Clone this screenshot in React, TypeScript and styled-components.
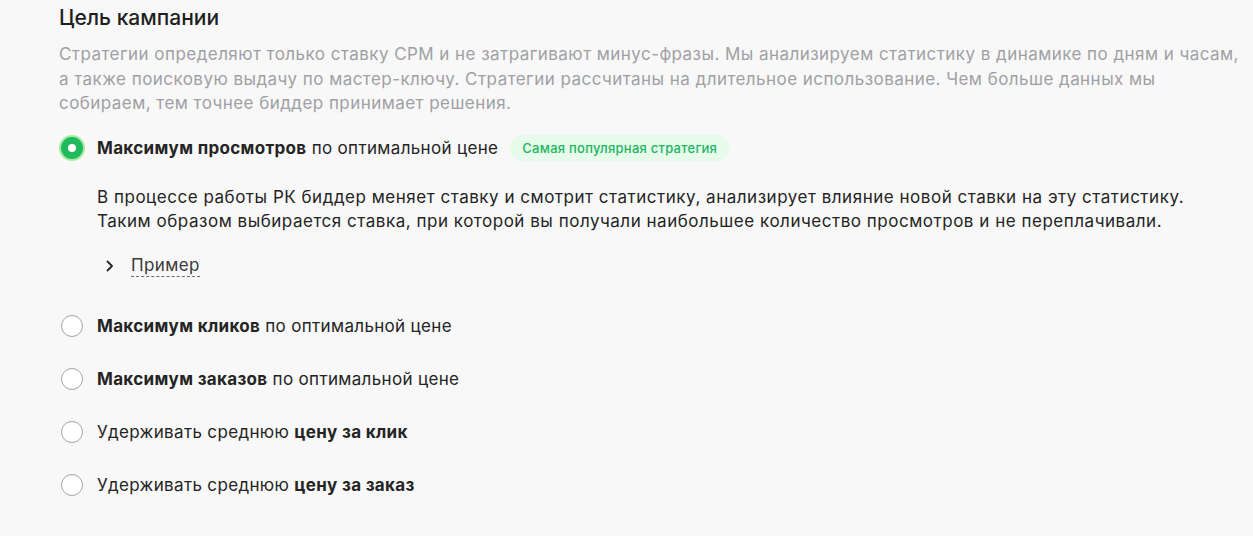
import React, { useState } from "react";
import styled, { createGlobalStyle } from "styled-components";

const GlobalStyle = createGlobalStyle`
  body {
    margin: 0;
    background: #f8f8f8;
    font-family: Inter, "Noto Sans", sans-serif;
    color: #242424;
  }
`;

type Option = {
  id: string;
  before?: string;
  bold: string;
  after?: string;
  badge?: string;
  text?: string[];
};

const options: Option[] = [
  {
    id: "views",
    bold: "Максимум просмотров",
    after: " по оптимальной цене",
    badge: "Самая популярная стратегия",
    text: [
      "В процессе работы РК биддер меняет ставку и смотрит статистику, анализирует влияние новой ставки на эту статистику.",
      "Таким образом выбирается ставка, при которой вы получали наибольшее количество просмотров и не переплачивали.",
    ],
  },
  { id: "clicks", bold: "Максимум кликов", after: " по оптимальной цене" },
  { id: "orders", bold: "Максимум заказов", after: " по оптимальной цене" },
  { id: "cpc", before: "Удерживать среднюю ", bold: "цену за клик" },
  { id: "cpo", before: "Удерживать среднюю ", bold: "цену за заказ" },
];

export default function App() {
  const [selected, setSelected] = useState("views");

  return (
    <Page>
      <GlobalStyle />
      <Title>Цель кампании</Title>
      <Lead>
        Стратегии определяют только ставку CPM и не затрагивают минус-фразы. Мы анализируем статистику в динамике по дням и часам,
        <br />
        а также поисковую выдачу по мастер-ключу. Стратегии рассчитаны на длительное использование. Чем больше данных мы
        <br />
        собираем, тем точнее биддер принимает решения.
      </Lead>

      <List>
        {options.map((o) => {
          const active = o.id === selected;
          return (
            <Item key={o.id}>
              <Row onClick={() => setSelected(o.id)}>
                <Radio $active={active} />
                <Label>
                  {o.before}
                  <b>{o.bold}</b>
                  {o.after}
                </Label>
                {o.badge && <Badge>{o.badge}</Badge>}
              </Row>
              {active && o.text && (
                <Details>
                  <p>
                    {o.text[0]}
                    <br />
                    {o.text[1]}
                  </p>
                  <Example>
                    <svg width="14" height="14" viewBox="0 0 14 14" fill="none">
                      <path d="M4.5 2.5l4.5 4.5-4.5 4.5" stroke="#242424" strokeWidth="1.8" strokeLinecap="round" strokeLinejoin="round" />
                    </svg>
                    <span>Пример</span>
                  </Example>
                </Details>
              )}
            </Item>
          );
        })}
      </List>
    </Page>
  );
}

const Page = styled.div`
  padding: 4px 0 0 59px;
`;

const Title = styled.h2`
  margin: 0;
  font-size: 21px;
  font-weight: 500;
  line-height: 28px;
  color: #1f1f1f;
`;

const Lead = styled.p`
  margin: 10px 0 0;
  font-size: 17px;
  letter-spacing: 0.45px;
  line-height: 24.5px;
  color: #a0a0a4;
  white-space: nowrap;
`;

const List = styled.div`
  display: flex;
  flex-direction: column;
  margin-top: 20px;
  gap: 29px;
`;

const Item = styled.div`
  display: flex;
  flex-direction: column;
`;

const Row = styled.label`
  display: flex;
  align-items: center;
  height: 24px;
  cursor: pointer;
`;

const Radio = styled.span<{ $active: boolean }>`
  box-sizing: border-box;
  width: 22px;
  height: 22px;
  margin-left: 2px;
  border-radius: 50%;
  flex-shrink: 0;
  background: #fff;
  border: ${(p) => (p.$active ? "7px solid #20b95d" : "1.5px solid #a3a3ab")};
  box-shadow: ${(p) => (p.$active ? "0 0 0 2px #a6eaa0" : "none")};
`;

const Label = styled.span`
  margin-left: 14px;
  font-size: 17px;
  letter-spacing: 0.33px;
  color: #242424;

  b {
    font-weight: 700;
  }
`;

const Badge = styled.span`
  margin-left: 12px;
  padding: 5px 12px;
  border-radius: 14px;
  background: #e6fbea;
  color: #22b562;
  font-size: 13px;
  letter-spacing: 0.25px;
  font-weight: 500;
`;

const Details = styled.div`
  padding: 25px 0 8px 38px;

  p {
    margin: 0;
    font-size: 17px;
    letter-spacing: 0.52px;
    line-height: 24.5px;
    color: #242424;
    white-space: nowrap;
  }
`;

const Example = styled.div`
  display: flex;
  align-items: center;
  gap: 14px;
  margin-top: 21px;
  padding-left: 6px;

  span {
    font-size: 17px;
    letter-spacing: 0.4px;
    color: #3a3a3a;
    border-bottom: 1px dashed #6a6a6a;
    line-height: 21px;
  }
`;
